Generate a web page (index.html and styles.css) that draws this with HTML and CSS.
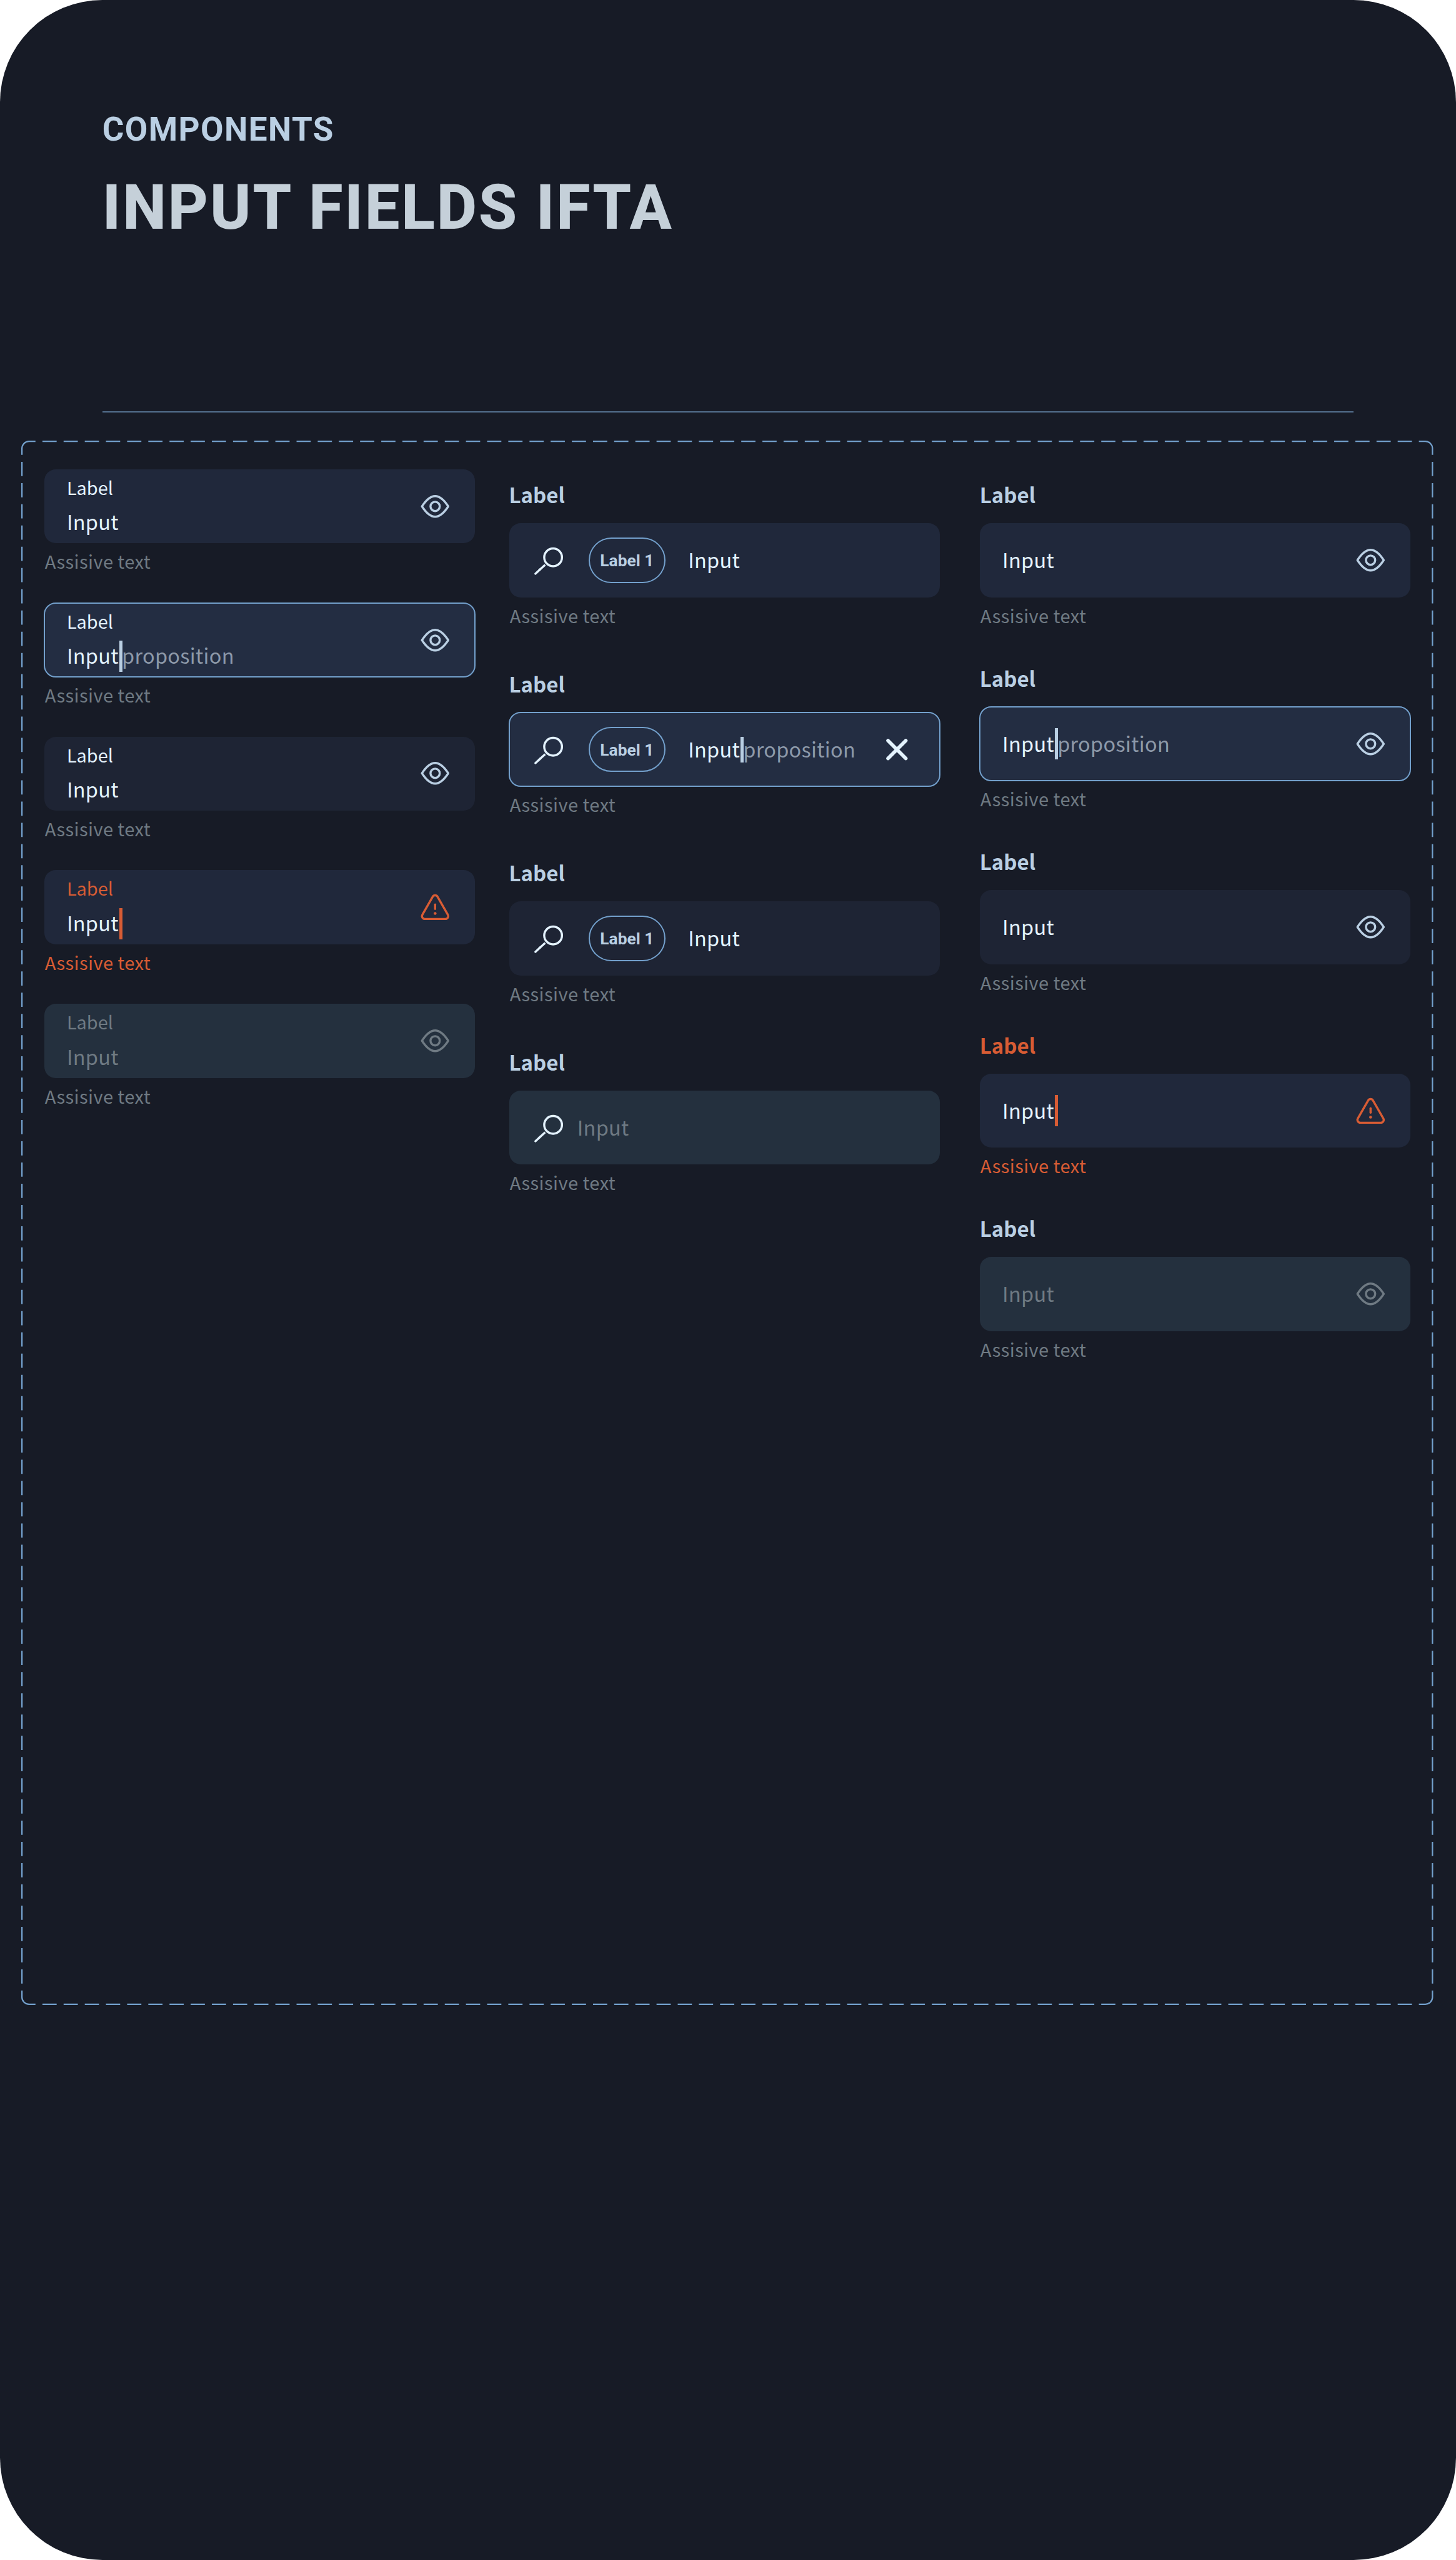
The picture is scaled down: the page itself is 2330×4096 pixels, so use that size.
FILE: index.html
```html
<!DOCTYPE html>
<html lang="en">
<head>
<meta charset="utf-8">
<title>Input fields IFTA</title>
<link rel="stylesheet" href="styles.css">
</head>
<body>
<svg class="sprite" aria-hidden="true">
  <symbol id="eye" viewBox="0 0 24 24"><path d="M2.75 12C4.9 8.7 7.9 4.75 12 4.75S19.1 8.7 21.25 12C19.1 15.3 16.1 19.25 12 19.25S4.9 15.3 2.75 12Z"/><circle cx="12" cy="12" r="3.25"/></symbol>
  <symbol id="warning" viewBox="0 0 24 24"><path d="M10.27 4.75a2 2 0 0 1 3.46 0l7.25 12.65a2 2 0 0 1-1.73 3H4.75a2 2 0 0 1-1.73-3Z"/><path d="M12 10.25v3.1"/><circle class="dot" cx="12" cy="16.5" r="1"/></symbol>
  <symbol id="search" viewBox="0 0 24 24"><circle cx="15" cy="10" r="6.25"/><path class="butt" d="M9.4 15.25 5 19.25"/><path d="M6 18.35 2.55 21.5"/></symbol>
  <symbol id="close" viewBox="0 0 24 24"><path d="M5.75 5.75l12.5 12.5M18.25 5.75l-12.5 12.5"/></symbol>
</svg>
<main class="sheet">
  <header class="head">
    <p class="kicker">COMPONENTS</p>
    <h1 class="title">INPUT FIELDS IFTA</h1>
  </header>
  <section class="frame">
    <svg class="dashes" viewBox="0 0 993 1100" aria-hidden="true">
      <path d="M14.9.5H983" stroke-dasharray="10 4.893"/>
      <path d="M14.9 1099.5H983" stroke-dasharray="10 4.893"/>
      <path d="M.5 14.9V1090" stroke-dasharray="10 4.93"/>
      <path d="M992.5 14.9V1090" stroke-dasharray="10 4.93"/>
      <path d="M10 .5H5.5a5 5 0 0 0-5 5V10M983 .5h4.500a5 5 0 0 1 5 5V10M10 1099.500H5.500a5 5 0 0 1-5-5V1090M983 1099.500h4.500a5 5 0 0 0 5-5V1090"/>
    </svg>

    <div class="column column-inset">
      <div class="item">
        <div class="field"><div class="stack"><span class="inner-label">Label</span><div class="line"><span class="value">Input</span></div></div><svg class="icon"><use href="#eye"/></svg></div>
        <p class="assist">Assisive text</p>
      </div>
      <div class="item">
        <div class="field focus"><div class="stack"><span class="inner-label">Label</span><div class="line"><span class="value">Input</span><i class="caret"></i><span class="hint">proposition</span></div></div><svg class="icon"><use href="#eye"/></svg></div>
        <p class="assist">Assisive text</p>
      </div>
      <div class="item">
        <div class="field hover"><div class="stack"><span class="inner-label">Label</span><div class="line"><span class="value">Input</span></div></div><svg class="icon"><use href="#eye"/></svg></div>
        <p class="assist">Assisive text</p>
      </div>
      <div class="item error">
        <div class="field"><div class="stack"><span class="inner-label">Label</span><div class="line"><span class="value">Input</span><i class="caret"></i></div></div><svg class="icon"><use href="#warning"/></svg></div>
        <p class="assist">Assisive text</p>
      </div>
      <div class="item disabled">
        <div class="field"><div class="stack"><span class="inner-label">Label</span><div class="line"><span class="value">Input</span></div></div><svg class="icon"><use href="#eye"/></svg></div>
        <p class="assist">Assisive text</p>
      </div>
    </div>

    <div class="column column-search">
      <div class="item">
        <p class="label">Label</p>
        <div class="field"><svg class="icon search"><use href="#search"/></svg><span class="chip">Label 1</span><div class="line"><span class="value">Input</span></div></div>
        <p class="assist">Assisive text</p>
      </div>
      <div class="item">
        <p class="label">Label</p>
        <div class="field focus"><svg class="icon search"><use href="#search"/></svg><span class="chip">Label 1</span><div class="line"><span class="value">Input</span><i class="caret"></i><span class="hint">proposition</span></div><svg class="icon close"><use href="#close"/></svg></div>
        <p class="assist">Assisive text</p>
      </div>
      <div class="item">
        <p class="label">Label</p>
        <div class="field hover"><svg class="icon search"><use href="#search"/></svg><span class="chip">Label 1</span><div class="line"><span class="value">Input</span></div></div>
        <p class="assist">Assisive text</p>
      </div>
      <div class="item disabled">
        <p class="label">Label</p>
        <div class="field"><svg class="icon search"><use href="#search"/></svg><div class="line"><span class="value">Input</span></div></div>
        <p class="assist">Assisive text</p>
      </div>
    </div>

    <div class="column column-plain">
      <div class="item">
        <p class="label">Label</p>
        <div class="field"><div class="line"><span class="value">Input</span></div><svg class="icon"><use href="#eye"/></svg></div>
        <p class="assist">Assisive text</p>
      </div>
      <div class="item">
        <p class="label">Label</p>
        <div class="field focus"><div class="line"><span class="value">Input</span><i class="caret"></i><span class="hint">proposition</span></div><svg class="icon"><use href="#eye"/></svg></div>
        <p class="assist">Assisive text</p>
      </div>
      <div class="item">
        <p class="label">Label</p>
        <div class="field hover"><div class="line"><span class="value">Input</span></div><svg class="icon"><use href="#eye"/></svg></div>
        <p class="assist">Assisive text</p>
      </div>
      <div class="item error">
        <p class="label">Label</p>
        <div class="field"><div class="line"><span class="value">Input</span><i class="caret"></i></div><svg class="icon"><use href="#warning"/></svg></div>
        <p class="assist">Assisive text</p>
      </div>
      <div class="item disabled">
        <p class="label">Label</p>
        <div class="field"><div class="line"><span class="value">Input</span></div><svg class="icon"><use href="#eye"/></svg></div>
        <p class="assist">Assisive text</p>
      </div>
    </div>
  </section>
</main>
</body>
</html>
```
FILE: styles.css
```css
/* 1rem is ten units of the 1024-unit wide sheet */
html {
  font-size: 22.7539px;
}

* {
  box-sizing: border-box;
}

body,
p,
h1 {
  margin: 0;
}

body {
  background: #fff;
  color: #e4f3ff;
  font-family: "Noto Sans CJK JP", "Noto Sans", sans-serif;
  overflow: hidden;
}

.sprite {
  display: none;
}

.sheet {
  width: 2330px;
  height: 4096px;
  border-radius: 7.2rem;
  background: #171b26;
  overflow: hidden;
}

.head {
  height: 29rem;
  margin: 0 7.2rem 2rem;
  padding: 7.6rem 0 0;
  border-bottom: 0.1rem solid #54708f;
  font-family: Roboto, sans-serif;
  white-space: nowrap;
}

.kicker {
  color: #bacfe3;
  font-size: 2.33rem;
  font-weight: 700;
  line-height: 3rem;
  letter-spacing: 0.06rem;
}

.title {
  margin-top: 1.54rem;
  color: #c5d0d9;
  font-size: 4.36rem;
  font-weight: 800;
  line-height: 5rem;
  letter-spacing: 0.125rem;
}

.frame {
  position: relative;
  display: flex;
  align-items: flex-start;
  width: 99.3rem;
  height: 110rem;
  margin-left: 1.5rem;
  padding: 2rem 0 0 1.6rem;
}

.dashes {
  position: absolute;
  inset: 0;
  width: 100%;
  height: 100%;
  fill: none;
  stroke: #73a0cc;
}

.column {
  display: flex;
  flex-direction: column;
  width: 30.3rem;
}

.column-inset {
  gap: 1.7rem;
}

.column-search {
  gap: 2.6rem;
  margin: 0.8rem 0 0 2.4rem;
}

.column-plain {
  gap: 2.2rem;
  margin: 0.8rem 0 0 2.8rem;
}

.label {
  height: 3rem;
  color: #bacfe3;
  font-size: 1.45rem;
  font-weight: 700;
  line-height: 1.98rem;
}

.field {
  display: flex;
  align-items: center;
  height: 5.2rem;
  padding: 0 1.6rem;
  border-radius: 0.8rem;
  background: #20283b;
}

.focus {
  background: #232d42;
  outline: 0.1rem solid #73a0cc;
  outline-offset: -0.05rem;
}

.hover {
  background: #1e2434;
}

.stack {
  align-self: flex-start;
}

.inner-label {
  display: block;
  height: 2.4rem;
  font-size: 1.27rem;
  line-height: 2.48rem;
}

.line {
  display: flex;
  align-items: center;
  height: 2.4rem;
  font-size: 1.43rem;
  line-height: 2.4rem;
  letter-spacing: 0.012rem;
}

.value {
  width: 3.7rem;
}

.value,
.hint {
  height: 2.4rem;
  line-height: 2.25rem;
}

.column-inset .value,
.column-inset .hint {
  line-height: 2.52rem;
}

.caret {
  width: 0.2rem;
  height: 2.2rem;
  background: #bacfe3;
}

.column-inset .caret {
  position: relative;
  top: 0.15rem;
}

.hint {
  margin-left: -0.03rem;
  color: #8d99a9;
}

.icon {
  width: 2.4rem;
  height: 2.4rem;
  margin-left: auto;
  fill: none;
  stroke: #bacfe3;
  stroke-width: 1.5;
  stroke-linecap: round;
  stroke-linejoin: round;
}

.search {
  margin: 0;
  stroke: #e4f3ff;
}

.butt {
  stroke-linecap: butt;
}

.dot {
  fill: currentColor;
  stroke: none;
}

.close {
  margin-right: 0.2rem;
  stroke: #e4f3ff;
  stroke-width: 2.5;
}

.chip {
  width: 5.4rem;
  height: 3.2rem;
  margin: 0 1.6rem;
  border: 0.1rem solid #73a0cc;
  border-radius: 1.6rem;
  color: #bacfe3;
  font-family: Roboto, sans-serif;
  font-size: 1.16rem;
  font-weight: 700;
  line-height: 3.1rem;
  text-align: center;
}

.column-search .caret {
  height: 1.8rem;
}

.assist {
  height: 2.5rem;
  padding-left: 0.05rem;
  color: #6f7a83;
  font-size: 1.28rem;
  line-height: 2.5rem;
  letter-spacing: 0.018rem;
}

.error .label,
.error .inner-label,
.error .assist {
  color: #d85c34;
}

.error .caret {
  background: #d85c34;
}

.error .icon {
  color: #d85c34;
  stroke: #d85c34;
}

.disabled .field {
  background: #24303e;
}

.disabled .inner-label,
.disabled .value {
  color: #6f7a83;
}

.disabled .icon {
  stroke: #6f7a83;
}

.disabled .search {
  margin-right: 0.8rem;
  stroke: #e4f3ff;
}
```
